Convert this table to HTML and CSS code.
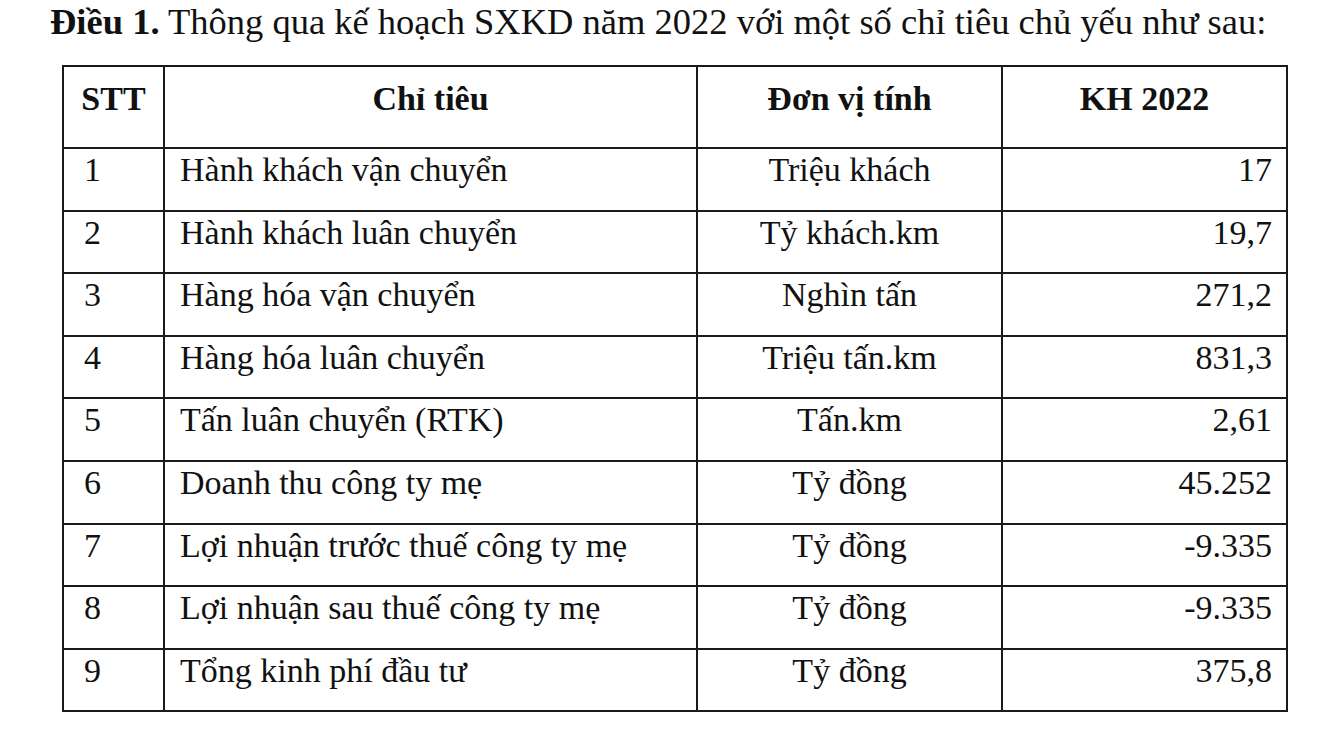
FILE: index.html
```html
<!DOCTYPE html>
<html lang="vi">
<head>
<meta charset="utf-8">
<title>Điều 1</title>
<link rel="stylesheet" href="styles.css">
</head>
<body>
<div class="page">
  <p class="title"><b>Điều 1.</b> Thông qua kế hoạch SXKD năm 2022 với một số chỉ tiêu chủ yếu như sau:</p>
  <table class="plan">
    <colgroup>
      <col class="c-stt">
      <col class="c-name">
      <col class="c-unit">
      <col class="c-value">
    </colgroup>
    <thead>
      <tr>
        <th>STT</th>
        <th>Chỉ tiêu</th>
        <th>Đơn vị tính</th>
        <th>KH 2022</th>
      </tr>
    </thead>
    <tbody>
      <tr><td class="stt">1</td><td class="name">Hành khách vận chuyển</td><td class="unit">Triệu khách</td><td class="value">17</td></tr>
      <tr><td class="stt">2</td><td class="name">Hành khách luân chuyển</td><td class="unit">Tỷ khách.km</td><td class="value">19,7</td></tr>
      <tr><td class="stt">3</td><td class="name">Hàng hóa vận chuyển</td><td class="unit">Nghìn tấn</td><td class="value">271,2</td></tr>
      <tr><td class="stt">4</td><td class="name">Hàng hóa luân chuyển</td><td class="unit">Triệu tấn.km</td><td class="value">831,3</td></tr>
      <tr><td class="stt">5</td><td class="name">Tấn luân chuyển (RTK)</td><td class="unit">Tấn.km</td><td class="value">2,61</td></tr>
      <tr><td class="stt">6</td><td class="name">Doanh thu công ty mẹ</td><td class="unit">Tỷ đồng</td><td class="value">45.252</td></tr>
      <tr><td class="stt">7</td><td class="name">Lợi nhuận trước thuế công ty mẹ</td><td class="unit">Tỷ đồng</td><td class="value">-9.335</td></tr>
      <tr><td class="stt">8</td><td class="name">Lợi nhuận sau thuế công ty mẹ</td><td class="unit">Tỷ đồng</td><td class="value">-9.335</td></tr>
      <tr><td class="stt">9</td><td class="name">Tổng kinh phí đầu tư</td><td class="unit">Tỷ đồng</td><td class="value">375,8</td></tr>
    </tbody>
  </table>
</div>
</body>
</html>
```

FILE: styles.css
```css
html, body {
  margin: 0;
  padding: 0;
  background: #ffffff;
}

body {
  font-family: "Liberation Serif", "Times New Roman", serif;
  color: #111111;
}

.page {
  width: 1318px;
  height: 732px;
  padding: 0 0 0 50px;
  box-sizing: border-box;
  overflow: hidden;
}

.title {
  margin: 0;
  padding-top: 1px;
  font-size: 36.5px;
  line-height: 42px;
  white-space: nowrap;
}

.title b {
  font-weight: bold;
}

.plan {
  margin: 22px 0 0 12px;
  border-collapse: collapse;
  table-layout: fixed;
  width: 1224px;
  font-family: "Liberation Serif", "Times New Roman", serif;
  font-size: 34px;
  line-height: 39px;
}

.c-stt { width: 101px; }
.c-name { width: 533px; }
.c-unit { width: 305px; }
.c-value { width: 285px; }

.plan th,
.plan td {
  border: 2px solid #1a1a1a;
  vertical-align: top;
  box-sizing: border-box;
  white-space: nowrap;
}

.plan th {
  height: 82px;
  padding: 12px 0 0;
  font-family: "Liberation Serif", "Times New Roman", serif;
  font-weight: bold;
  text-align: center;
}

.plan td {
  height: 62.6px;
  padding: 1px 0 0;
}

.plan td.stt {
  padding-left: 20px;
}

.plan td.name {
  padding-left: 15px;
}

.plan td.unit {
  text-align: center;
}

.plan td.value {
  text-align: right;
  padding-right: 14px;
}
```
